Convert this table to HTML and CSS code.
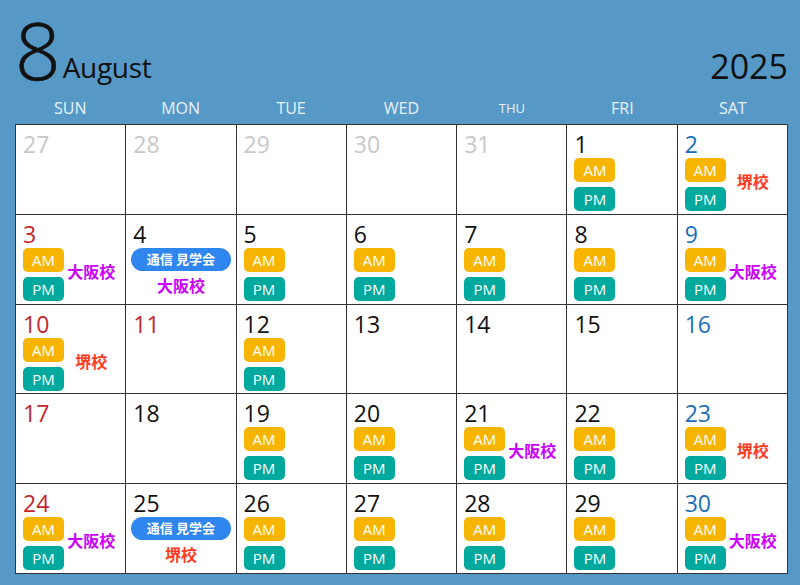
FILE: index.html
```html
<!DOCTYPE html>
<html lang="ja">
<head>
  <meta charset="UTF-8" />
  <meta name="viewport" content="width=device-width, initial-scale=1" />
  <title>2025年8月 カレンダー</title>
  <link rel="stylesheet" href="styles.css">
</head>
<body>
  <div class="calendar">
    <!-- 月と年 -->
    <div class="top">
      <div class="title">
        <span class="month-num">8</span>
        <span class="month-name">August</span>
      </div>
      <span class="year">2025</span>
    </div>

    <!-- 曜日 -->
    <div class="weekdays">
      <span>SUN</span>
      <span>MON</span>
      <span>TUE</span>
      <span>WED</span>
      <span class="small">THU</span>
      <span>FRI</span>
      <span>SAT</span>
    </div>

    <!-- 日付 -->
    <div class="grid">
      <!-- 1週目 -->
      <div class="day"><span class="num other">27</span></div>
      <div class="day"><span class="num other">28</span></div>
      <div class="day"><span class="num other">29</span></div>
      <div class="day"><span class="num other">30</span></div>
      <div class="day"><span class="num other">31</span></div>
      <div class="day">
        <span class="num">1</span>
        <div class="slots"><div class="badges"><span class="badge am">AM</span><span class="badge pm">PM</span></div></div>
      </div>
      <div class="day">
        <span class="num sat">2</span>
        <div class="slots"><div class="badges"><span class="badge am">AM</span><span class="badge pm">PM</span></div><span class="place sakai">堺校</span></div>
      </div>

      <!-- 2週目 -->
      <div class="day">
        <span class="num sun">3</span>
        <div class="slots"><div class="badges"><span class="badge am">AM</span><span class="badge pm">PM</span></div><span class="place osaka">大阪校</span></div>
      </div>
      <div class="day">
        <span class="num">4</span>
        <div class="event"><span class="pill">通信 見学会</span><span class="place osaka">大阪校</span></div>
      </div>
      <div class="day">
        <span class="num">5</span>
        <div class="slots"><div class="badges"><span class="badge am">AM</span><span class="badge pm">PM</span></div></div>
      </div>
      <div class="day">
        <span class="num">6</span>
        <div class="slots"><div class="badges"><span class="badge am">AM</span><span class="badge pm">PM</span></div></div>
      </div>
      <div class="day">
        <span class="num">7</span>
        <div class="slots"><div class="badges"><span class="badge am">AM</span><span class="badge pm">PM</span></div></div>
      </div>
      <div class="day">
        <span class="num">8</span>
        <div class="slots"><div class="badges"><span class="badge am">AM</span><span class="badge pm">PM</span></div></div>
      </div>
      <div class="day">
        <span class="num sat">9</span>
        <div class="slots"><div class="badges"><span class="badge am">AM</span><span class="badge pm">PM</span></div><span class="place osaka">大阪校</span></div>
      </div>

      <!-- 3週目 -->
      <div class="day">
        <span class="num sun">10</span>
        <div class="slots"><div class="badges"><span class="badge am">AM</span><span class="badge pm">PM</span></div><span class="place sakai">堺校</span></div>
      </div>
      <div class="day"><span class="num sun">11</span></div>
      <div class="day">
        <span class="num">12</span>
        <div class="slots"><div class="badges"><span class="badge am">AM</span><span class="badge pm">PM</span></div></div>
      </div>
      <div class="day"><span class="num">13</span></div>
      <div class="day"><span class="num">14</span></div>
      <div class="day"><span class="num">15</span></div>
      <div class="day"><span class="num sat">16</span></div>

      <!-- 4週目 -->
      <div class="day"><span class="num sun">17</span></div>
      <div class="day"><span class="num">18</span></div>
      <div class="day">
        <span class="num">19</span>
        <div class="slots"><div class="badges"><span class="badge am">AM</span><span class="badge pm">PM</span></div></div>
      </div>
      <div class="day">
        <span class="num">20</span>
        <div class="slots"><div class="badges"><span class="badge am">AM</span><span class="badge pm">PM</span></div></div>
      </div>
      <div class="day">
        <span class="num">21</span>
        <div class="slots"><div class="badges"><span class="badge am">AM</span><span class="badge pm">PM</span></div><span class="place osaka">大阪校</span></div>
      </div>
      <div class="day">
        <span class="num">22</span>
        <div class="slots"><div class="badges"><span class="badge am">AM</span><span class="badge pm">PM</span></div></div>
      </div>
      <div class="day">
        <span class="num sat">23</span>
        <div class="slots"><div class="badges"><span class="badge am">AM</span><span class="badge pm">PM</span></div><span class="place sakai">堺校</span></div>
      </div>

      <!-- 5週目 -->
      <div class="day">
        <span class="num sun">24</span>
        <div class="slots"><div class="badges"><span class="badge am">AM</span><span class="badge pm">PM</span></div><span class="place osaka">大阪校</span></div>
      </div>
      <div class="day">
        <span class="num">25</span>
        <div class="event"><span class="pill">通信 見学会</span><span class="place sakai">堺校</span></div>
      </div>
      <div class="day">
        <span class="num">26</span>
        <div class="slots"><div class="badges"><span class="badge am">AM</span><span class="badge pm">PM</span></div></div>
      </div>
      <div class="day">
        <span class="num">27</span>
        <div class="slots"><div class="badges"><span class="badge am">AM</span><span class="badge pm">PM</span></div></div>
      </div>
      <div class="day">
        <span class="num">28</span>
        <div class="slots"><div class="badges"><span class="badge am">AM</span><span class="badge pm">PM</span></div></div>
      </div>
      <div class="day">
        <span class="num">29</span>
        <div class="slots"><div class="badges"><span class="badge am">AM</span><span class="badge pm">PM</span></div></div>
      </div>
      <div class="day">
        <span class="num sat">30</span>
        <div class="slots"><div class="badges"><span class="badge am">AM</span><span class="badge pm">PM</span></div><span class="place osaka">大阪校</span></div>
      </div>
    </div>
  </div>
</body>
</html>
```

FILE: styles.css
```css
/* ===== General ===== */
body {
  margin: 0;
  background-color: #5699c7;
  font-family: "Open Sans", "Noto Sans CJK JP", sans-serif;
  color: #111;
}
.calendar {
  width: 773px;
  margin-left: 15px;
}

/* ===== Header ===== */
.top {
  height: 95px;
  display: flex;
  justify-content: space-between;
  align-items: flex-end;
}
.title {
  display: flex;
  align-items: flex-end;
  margin-bottom: -2px;
}
.month-num {
  font-size: 80px;
  line-height: 96px;
  font-weight: 300;
  -webkit-text-stroke: 0.6px #111;
}
.month-name {
  font-size: 28px;
  line-height: 28px;
  margin-left: 2px;
  margin-bottom: 16px;
  letter-spacing: -0.3px;
}
.year {
  font-size: 34px;
  line-height: 34px;
  margin-bottom: 12px;
}

/* ===== Weekdays ===== */
.weekdays {
  height: 29px;
  padding-bottom: 3px;
  box-sizing: border-box;
  display: grid;
  grid-template-columns: repeat(7, 1fr);
  align-items: center;
  text-align: center;
  color: #e8f1fa;
  font-size: 16px;
}
.weekdays .small {
  font-size: 13px;
}

/* ===== Grid ===== */
.grid {
  display: grid;
  grid-template-columns: repeat(7, 1fr);
  grid-template-rows: repeat(5, 1fr);
  gap: 1px;
  height: 450px;
  padding: 1px;
  box-sizing: border-box;
  background-color: #333;
}
.day {
  background-color: #fff;
  padding: 7px 7px 0;
  display: flex;
  flex-direction: column;
  min-width: 0;
}
.num {
  font-size: 23px;
  line-height: 24px;
}
.num.other {
  color: #c8c8c8;
}
.num.sun {
  color: #c4262e;
}
.num.sat {
  color: #1b6fb8;
}

/* ===== AM / PM ===== */
.slots {
  display: flex;
  align-items: center;
  margin-top: 2px;
}
.badges {
  display: flex;
  flex-direction: column;
  gap: 5px;
}
.badge {
  width: 41px;
  height: 24px;
  border-radius: 5px;
  color: #fff;
  font-size: 15px;
  line-height: 24px;
  text-align: center;
}
.am {
  background-color: #f7b500;
}
.pm {
  background-color: #00a99d;
}
.place {
  flex: 1;
  text-align: center;
  font-weight: 700;
  font-size: 16px;
  line-height: 18px;
  margin-bottom: 5px;
}
.osaka {
  color: #cc00ff;
}
.sakai {
  color: #ff3b1f;
}

/* ===== Events ===== */
.event {
  display: flex;
  flex-direction: column;
  align-items: center;
  margin-top: 2px;
}
.pill {
  width: 100px;
  height: 23px;
  border-radius: 12px;
  background-color: #2f86ef;
  color: #fff;
  font-weight: 700;
  font-size: 13px;
  line-height: 23px;
  text-align: center;
}
.event .place {
  margin: 6px 0 0;
}
```
